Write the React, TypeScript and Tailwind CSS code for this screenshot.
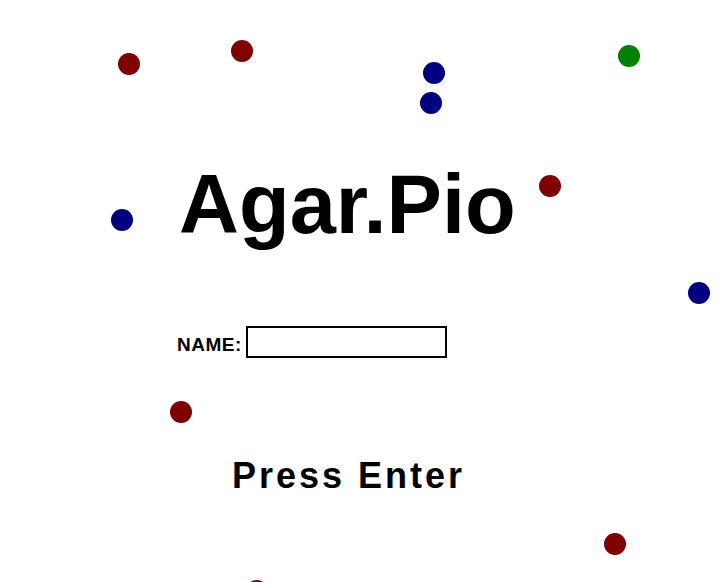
import { useState } from 'react';

type Dot = { x: number; y: number; color: string };

// centres of the food pellets on the canvas
const dots: Dot[] = [
  { x: 129, y: 64, color: 'bg-[#800000]' },
  { x: 242, y: 51, color: 'bg-[#800000]' },
  { x: 434, y: 73, color: 'bg-[#000080]' },
  { x: 431, y: 103, color: 'bg-[#000080]' },
  { x: 629, y: 56, color: 'bg-[#008000]' },
  { x: 550, y: 186, color: 'bg-[#800000]' },
  { x: 122, y: 220, color: 'bg-[#000080]' },
  { x: 699, y: 293, color: 'bg-[#000080]' },
  { x: 181, y: 412, color: 'bg-[#800000]' },
  { x: 615, y: 544, color: 'bg-[#800000]' },
  { x: 257, y: 591, color: 'bg-[#800000]' },
];

export default function App() {
  const [name, setName] = useState('');

  return (
    <div className="relative w-[720px] h-[582px] overflow-hidden bg-white text-black font-['Liberation_Sans',Arial,sans-serif] font-bold">
      {dots.map((d, i) => (
        <div
          key={i}
          className={`absolute w-[22px] h-[22px] rounded-full ${d.color}`}
          style={{ left: d.x - 11, top: d.y - 11 }}
        />
      ))}

      <div className="flex flex-col pt-[163px]">
        <h1 className="pl-[179px] text-[83px] leading-[83px]">Agar.Pio</h1>

        <div className="flex items-center gap-1 pl-[177px] mt-[80px]">
          <label htmlFor="name" className="text-[19px] leading-[19px] mt-[5px] tracking-[0.5px]">
            NAME:
          </label>
          <input
            id="name"
            value={name}
            onChange={(e) => setName(e.target.value)}
            className="w-[201px] h-[32px] border-2 border-black bg-white px-1 text-[16px] outline-none"
          />
        </div>

        <p className="pl-[232px] mt-[100px] text-[36px] leading-[36px] tracking-[3px]">Press Enter</p>
      </div>
    </div>
  );
}
